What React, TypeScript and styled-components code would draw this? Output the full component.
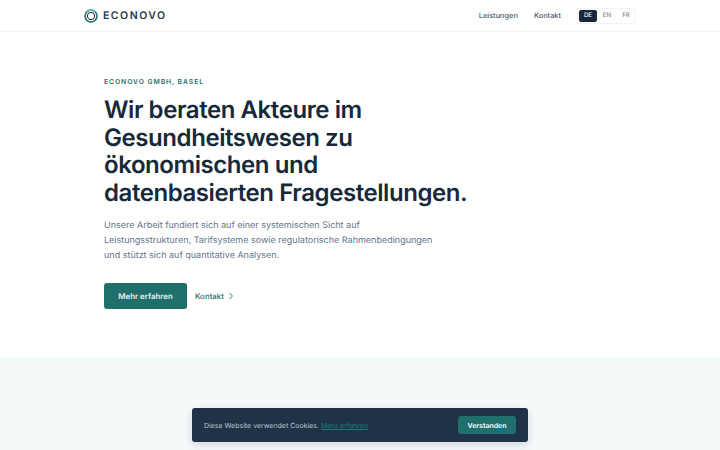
import styled, { createGlobalStyle } from "styled-components";

const GlobalStyle = createGlobalStyle`
  html, body {
    margin: 0;
    padding: 0;
    height: 100%;
    overflow: hidden;
    background: #fff;
    font-family: Inter, "Liberation Sans", sans-serif;
    text-rendering: geometricPrecision;
  }
`;

const languages = ["DE", "EN", "FR"];

export default function App() {
  return (
    <Page>
      <GlobalStyle />
      <Header>
        <HeaderInner>
          <Logo>
            <svg width="14" height="14" viewBox="0 0 14 14" fill="none">
              <circle cx="7" cy="7" r="6" stroke="#1f6f6d" strokeWidth="1.6" />
              <path d="M2.8 2.8A6 6 0 0 1 11.2 2.8" stroke="#6fb5a8" strokeWidth="1.6" />
              <circle cx="7" cy="7" r="3.7" stroke="#16293a" strokeWidth="1" />
            </svg>
            <LogoText>ECONOVO</LogoText>
          </Logo>
          <Nav>
            <NavLink>Leistungen</NavLink>
            <NavLink>Kontakt</NavLink>
            <LangSwitch>
              {languages.map((lang) => (
                <LangButton key={lang} $active={lang === "DE"}>
                  {lang}
                </LangButton>
              ))}
            </LangSwitch>
          </Nav>
        </HeaderInner>
      </Header>
      <Hero>
        <Eyebrow>ECONOVO GMBH, BASEL</Eyebrow>
        <Title>
          Wir beraten Akteure im
          <br />
          Gesundheitswesen zu
          <br />
          ökonomischen und
          <br />
          datenbasierten Fragestellungen.
        </Title>
        <Lead>
          Unsere Arbeit fundiert sich auf einer systemischen Sicht auf
          <br />
          Leistungsstrukturen, Tarifsysteme sowie regulatorische Rahmenbedingungen
          <br />
          und stützt sich auf quantitative Analysen.
        </Lead>
        <Actions>
          <PrimaryButton>Mehr erfahren</PrimaryButton>
          <TextLink>
            Kontakt
            <svg width="8" height="8" viewBox="0 0 8 8" fill="none">
              <path d="M2.5 1L5.5 4L2.5 7" stroke="#1f6f6d" strokeWidth="0.9" />
            </svg>
          </TextLink>
        </Actions>
      </Hero>
      <Band />
      <CookieBar>
        <CookieText>
          Diese Website verwendet Cookies. <CookieLink>Mehr erfahren</CookieLink>
        </CookieText>
        <CookieButton>Verstanden</CookieButton>
      </CookieBar>
    </Page>
  );
}

const Page = styled.div`
  position: relative;
  height: 450px;
  overflow: hidden;
  display: flex;
  flex-direction: column;
`;

const Header = styled.header`
  height: 31px;
  border-bottom: 1px solid #f1f3f5;
  flex: none;
`;

const HeaderInner = styled.div`
  width: 552px;
  height: 100%;
  margin: 0 auto;
  display: flex;
  align-items: center;
  justify-content: space-between;
`;

const Logo = styled.div`
  display: flex;
  align-items: center;
  gap: 5px;
`;

const LogoText = styled.span`
  font-size: 10.5px;
  font-weight: 600;
  letter-spacing: 1.5px;
  color: #2b3a47;
`;

const Nav = styled.nav`
  display: flex;
  align-items: center;
`;

const NavLink = styled.a`
  font-size: 7.4px;
  font-weight: 500;
  color: #4b5a6a;
  margin-right: 16px;
`;

const LangSwitch = styled.div`
  display: flex;
  gap: 1px;
  padding: 1px 0 1px 1px;
  border: 1px solid #f1f3f5;
  border-radius: 3px;
`;

const LangButton = styled.span<{ $active: boolean }>`
  width: 18px;
  height: 12px;
  border-radius: 2px;
  display: flex;
  align-items: center;
  justify-content: center;
  font-size: 6.2px;
  font-weight: 500;
  background: ${(p) => (p.$active ? "#16293a" : "transparent")};
  color: ${(p) => (p.$active ? "#fff" : "#7b8794")};
`;

const Hero = styled.section`
  height: 325px;
  flex: none;
  box-sizing: border-box;
  padding: 44.5px 0 0 104px;
`;

const Eyebrow = styled.div`
  font-size: 6.75px;
  line-height: 10px;
  font-weight: 600;
  letter-spacing: 0.95px;
  color: #1f6f6d;
`;

const Title = styled.h1`
  margin: 9.5px 0 0;
  font-size: 24px;
  line-height: 27.6px;
  font-weight: 600;
  letter-spacing: -0.43px;
  color: #16293a;
`;

const Lead = styled.p`
  margin: 13px 0 0;
  font-size: 9px;
  line-height: 14.6px;
  color: #64748b;
`;

const Actions = styled.div`
  display: flex;
  align-items: center;
  gap: 8px;
  margin-top: 20px;
`;

const PrimaryButton = styled.a`
  width: 83px;
  height: 26px;
  border-radius: 3px;
  background: #1f6f6d;
  color: #e6f2f1;
  font-size: 7.9px;
  font-weight: 600;
  display: flex;
  align-items: center;
  justify-content: center;
`;

const TextLink = styled.a`
  display: flex;
  align-items: center;
  gap: 3px;
  font-size: 7.9px;
  font-weight: 500;
  color: #1f6f6d;
`;

const Band = styled.section`
  flex: 1;
  background: #f4f9f9;
`;

const CookieBar = styled.div`
  position: absolute;
  left: 192px;
  top: 408px;
  width: 336px;
  height: 34px;
  box-sizing: border-box;
  padding: 0 12px;
  border-radius: 3px;
  background: #1f3346;
  box-shadow: 0 3px 10px rgba(22, 41, 58, 0.15);
  display: flex;
  align-items: center;
  justify-content: space-between;
`;

const CookieText = styled.span`
  font-size: 7px;
  color: #b8c2cc;
`;

const CookieLink = styled.a`
  color: #1f7a78;
  text-decoration: underline;
`;

const CookieButton = styled.a`
  width: 58px;
  height: 18px;
  border-radius: 3px;
  background: #1f6f6d;
  color: #fff;
  font-size: 7px;
  font-weight: 600;
  display: flex;
  align-items: center;
  justify-content: center;
`;
